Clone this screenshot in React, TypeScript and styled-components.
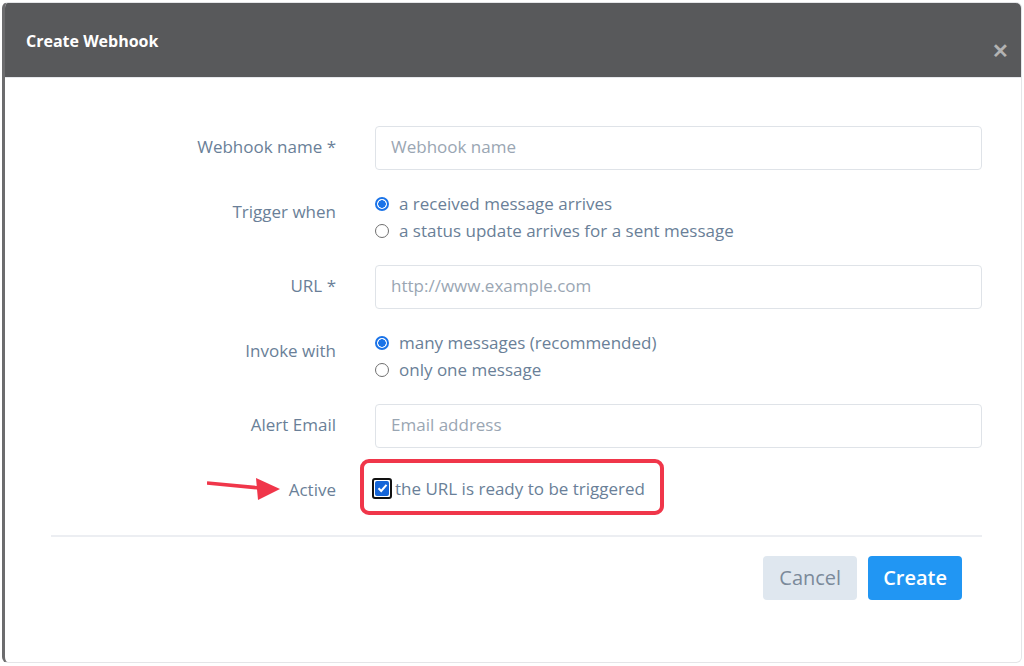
import styled, { createGlobalStyle } from "styled-components";

const GlobalStyle = createGlobalStyle`
  html, body {
    margin: 0;
    padding: 0;
    background: #ffffff;
  }
  body {
    font-family: "Open Sans", "Noto Sans", sans-serif;
  }
`;

const colors = {
  header: "#58595b",
  label: "#6a7f98",
  placeholder: "#9aa6b3",
  inputBorder: "#dfe3e8",
  blue: "#2196f3",
  red: "#f0364a",
};

const Modal = styled.div`
  margin: 2px;
  height: 661px;
  box-sizing: border-box;
  border: 1px solid #e4e5e8;
  border-left: 3px solid #6c6c6e;
  border-radius: 6px;
  overflow: hidden;
  background: #ffffff;
  display: flex;
  flex-direction: column;
`;

const Header = styled.header`
  height: 75px;
  box-sizing: border-box;
  background: ${colors.header};
  display: flex;
  align-items: flex-start;
  justify-content: space-between;
  padding: 27px 12px 0 21px;
  border-bottom: 1px solid #e6e8ec;
`;

const Title = styled.h1`
  margin: 0;
  font-size: 16px;
  font-weight: 700;
  color: #ffffff;
  line-height: 22px;
`;

const Close = styled.span`
  margin-top: 11px;
  color: #b3b3b3;
  font-size: 20px;
  font-weight: 700;
  line-height: 20px;
`;

const Body = styled.div`
  padding: 48px 39px 0 46px;
`;

const Form = styled.div`
  display: grid;
  grid-template-columns: 285px 1fr;
  column-gap: 39px;
  row-gap: 20px;
`;

const Label = styled.div<{ $top?: boolean }>`
  text-align: right;
  font-size: 17px;
  color: ${colors.label};
  align-self: ${(p) => (p.$top ? "start" : "center")};
  padding-top: ${(p) => (p.$top ? "10px" : "0")};
  padding-bottom: ${(p) => (p.$top ? "0" : "3px")};
  position: relative;
`;

const Input = styled.div`
  height: 44px;
  box-sizing: border-box;
  border: 1px solid ${colors.inputBorder};
  border-radius: 4px;
  padding: 0 15px 3px;
  display: flex;
  align-items: center;
  font-size: 17px;
  color: ${colors.placeholder};
`;

const RadioGroup = styled.div`
  display: flex;
  flex-direction: column;
  padding-bottom: 1px;
`;

const RadioRow = styled.label`
  display: flex;
  align-items: center;
  gap: 10px;
  height: 27px;
  font-size: 17px;
  color: ${colors.label};
`;

const RadioDot = styled.span<{ $checked?: boolean }>`
  width: 14px;
  height: 14px;
  flex-shrink: 0;
  box-sizing: border-box;
  border-radius: 50%;
  border: ${(p) => (p.$checked ? `2px solid #1a73e8` : `1px solid #6f6f6f`)};
  background: ${(p) =>
    p.$checked ? "radial-gradient(circle, #1a73e8 0 3.5px, #fff 4px)" : "#fff"};
`;

const ActiveBox = styled.div`
  margin-left: -15px;
  margin-top: -9px;
  width: 304px;
  height: 56px;
  box-sizing: border-box;
  border: 4px solid ${colors.red};
  border-radius: 9px;
  display: flex;
  align-items: center;
  padding-left: 8px;
  padding-top: 2px;
  gap: 3px;
  font-size: 17px;
  color: ${colors.label};
`;

const ActiveLabel = styled(Label)`
  margin-top: -9px;
  padding-top: 4px;
  padding-bottom: 0;
`;

const Checkbox = styled.span`
  width: 20px;
  height: 21px;
  flex-shrink: 0;
  box-sizing: border-box;
  border: 2px solid #111;
  border-radius: 3px;
  padding: 1px;
  display: flex;
`;

const CheckFill = styled.span`
  flex: 1;
  background: #1565d8;
  border-radius: 2px;
  display: flex;
  align-items: center;
  justify-content: center;
`;

const Arrow = styled.svg`
  position: absolute;
  left: 156px;
  top: 3px;
`;

const Divider = styled.hr`
  margin: 20px 0 0 0;
  border: none;
  border-top: 2px solid #eceef2;
`;

const Footer = styled.div`
  display: flex;
  justify-content: flex-end;
  gap: 11px;
  padding: 19px 20px 0 0;
`;

const Button = styled.button<{ $primary?: boolean }>`
  height: 44px;
  padding: 0 ${(p) => (p.$primary ? "15px" : "16px")} 2px;
  border: none;
  border-radius: 4px;
  font-family: inherit;
  font-size: 20px;
  background: ${(p) => (p.$primary ? colors.blue : "#dfe7ef")};
  color: ${(p) => (p.$primary ? "#ffffff" : "#7b8a9a")};
  font-weight: ${(p) => (p.$primary ? 600 : 400)};
`;

export default function App() {
  return (
    <>
      <GlobalStyle />
      <Modal>
        <Header>
          <Title>Create Webhook</Title>
          <Close>✕</Close>
        </Header>
        <Body>
          <Form>
            <Label>Webhook name *</Label>
            <Input>Webhook name</Input>

            <Label $top>Trigger when</Label>
            <RadioGroup>
              <RadioRow>
                <RadioDot $checked />a received message arrives
              </RadioRow>
              <RadioRow>
                <RadioDot />a status update arrives for a sent message
              </RadioRow>
            </RadioGroup>

            <Label>URL *</Label>
            <Input>http://www.example.com</Input>

            <Label $top>Invoke with</Label>
            <RadioGroup>
              <RadioRow>
                <RadioDot $checked />many messages (recommended)
              </RadioRow>
              <RadioRow>
                <RadioDot />only one message
              </RadioRow>
            </RadioGroup>

            <Label>Alert Email</Label>
            <Input>Email address</Input>

            <ActiveLabel>
              <Arrow width="74" height="24" viewBox="0 0 74 24">
                <path d="M0 6 L53 11" stroke={colors.red} strokeWidth="3.5" fill="none" />
                <path d="M49 1 L73 12 L51 23 Z" fill={colors.red} />
              </Arrow>
              Active
            </ActiveLabel>
            <ActiveBox>
              <Checkbox>
                <CheckFill>
                  <svg width="11" height="10" viewBox="0 0 11 10">
                    <path d="M1.5 5.2 L4.2 8 L9.5 1.8" stroke="#fff" strokeWidth="2" fill="none" />
                  </svg>
                </CheckFill>
              </Checkbox>
              the URL is ready to be triggered
            </ActiveBox>
          </Form>
          <Divider />
          <Footer>
            <Button>Cancel</Button>
            <Button $primary>Create</Button>
          </Footer>
        </Body>
      </Modal>
    </>
  );
}
